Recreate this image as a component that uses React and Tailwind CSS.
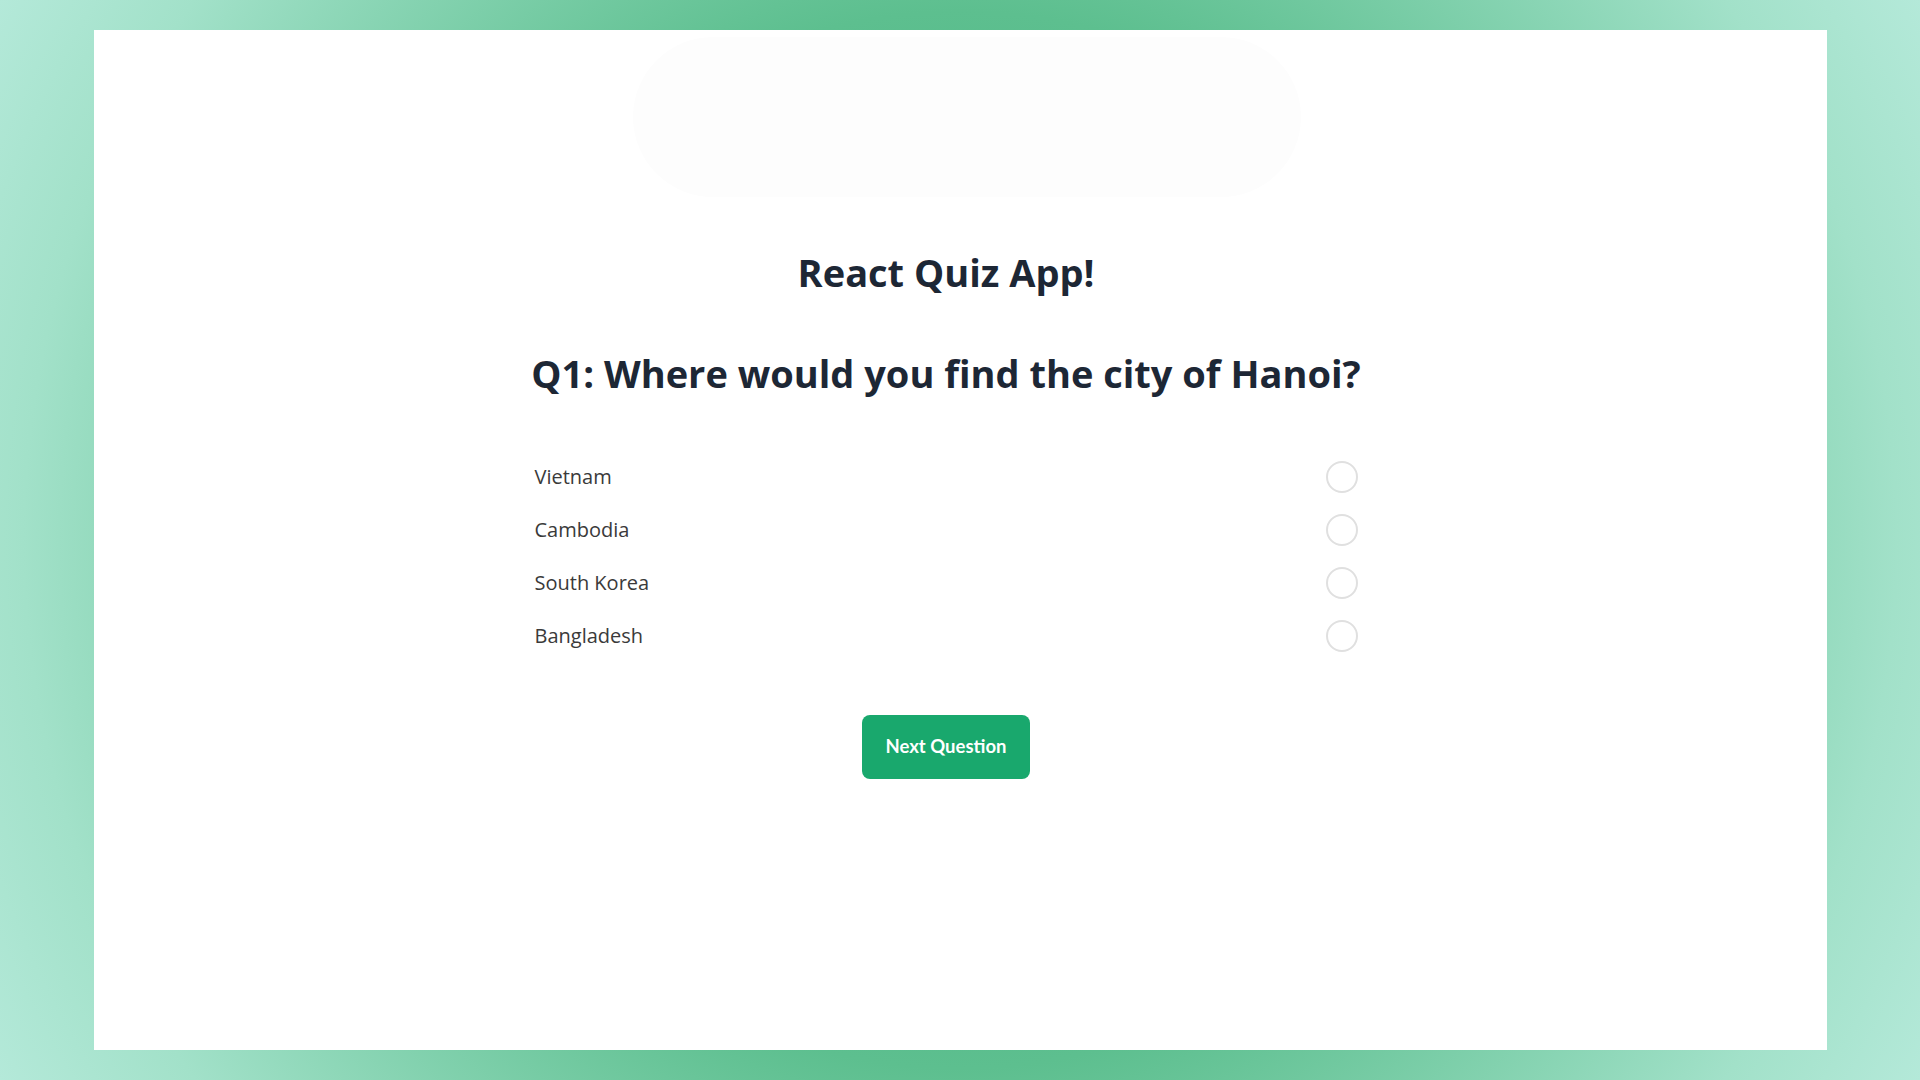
import React, { useState } from 'react';

const question = {
  text: 'Q1: Where would you find the city of Hanoi?',
  options: ['Vietnam', 'Cambodia', 'South Korea', 'Bangladesh'],
};

const App = () => {
  const [selected, setSelected] = useState(null);

  return (
    <div className="w-screen h-screen flex pt-[30px] pb-[30px] pl-[94px] pr-[93px] bg-[radial-gradient(circle_at_center,#35ab76_0%,#5dbf8f_48%,#a2e1c9_85%,#b4e9d9_100%)] font-['Open_Sans',sans-serif]">
      <div className="flex-1 bg-white flex flex-col items-center pr-[29px]">
        {/* faded header image */}
        <div className="mt-[7px] ml-[41px] w-[668px] h-[160px] rounded-[80px] bg-[#fdfdfd]" />

        <h1 className="mt-[52px] text-[38px] leading-[46px] font-bold text-[#1d2735]">React Quiz App!</h1>

        <h2 className="mt-[55px] text-[38px] leading-[46px] font-bold text-[#1d2735]">{question.text}</h2>

        <div className="mt-[54px] w-[823px] flex flex-col">
          {question.options.map((opt, i) => (
            <label key={opt} className="h-[53px] flex items-center justify-between cursor-pointer" onClick={() => setSelected(i)}>
              <span className="text-[20px] text-[#3a3a3a]">{opt}</span>
              <span className={`w-[32px] h-[32px] rounded-full border-2 ${selected === i ? 'border-[#19a86d] bg-[#19a86d]' : 'border-[#e0e0e0] bg-white'}`} />
            </label>
          ))}
        </div>

        <button className="mt-[53px] w-[168px] h-[64px] rounded-lg bg-[#19a86d] text-white text-[18.5px] font-bold font-['Lato',sans-serif]">
          Next Question
        </button>
      </div>
    </div>
  );
};

export default App;
